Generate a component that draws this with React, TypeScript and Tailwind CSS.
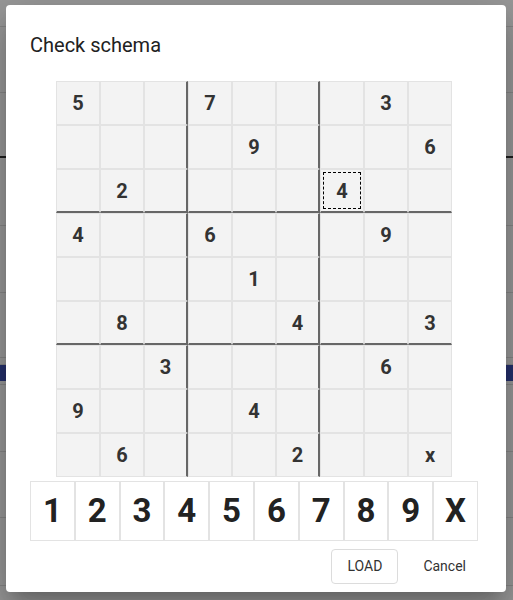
import React from 'react';

/** Схема судоку: null — пустая клетка. */
const BOARD: (string | null)[][] = [
  ['5', null, null, '7', null, null, null, '3', null],
  [null, null, null, null, '9', null, null, null, '6'],
  [null, '2', null, null, null, null, '4', null, null],
  ['4', null, null, '6', null, null, null, '9', null],
  [null, null, null, null, '1', null, null, null, null],
  [null, '8', null, null, null, '4', null, null, '3'],
  [null, null, '3', null, null, null, null, '6', null],
  ['9', null, null, null, '4', null, null, null, null],
  [null, '6', null, null, null, '2', null, null, 'x'],
];

const PAD = ['1', '2', '3', '4', '5', '6', '7', '8', '9', 'X'];

const SELECTED = { row: 2, col: 6 };

/** Фон страницы под затемнением (видны только края). */
function BackgroundPage(): JSX.Element {
  const rows = [27, 66, 65, 68, 67, 65, 7, 16, 4, 67, 66, 68];
  return (
    <div className="h-[600px] w-[513px] overflow-hidden bg-white">
      {rows.map((h, i) => (
        <div
          key={i}
          style={{ height: h }}
          className={
            i === 6
              ? 'border-b border-[#e0e0e0] bg-white'
              : i === 7
                ? 'bg-[#3f51b5]'
                : i === 2
                  ? 'border-b-2 border-[#333]'
                  : 'border-b border-[#e0e0e0]'
          }
        />
      ))}
    </div>
  );
}

function Cell({ value, row, col }: { value: string | null; row: number; col: number }): JSX.Element {
  const selected = row === SELECTED.row && col === SELECTED.col;
  const thickRight = col === 2 || col === 5;
  const thickBottom = row === 2 || row === 5;
  return (
    <div
      className={[
        'flex h-[44px] w-[44px] border border-[#e3e3e3] bg-[#f3f3f3] p-[2px]',
        thickRight ? 'border-r-2 border-r-[#666666]' : '',
        thickBottom ? 'border-b-2 border-b-[#666666]' : '',
      ].join(' ')}
    >
      <div
        className={[
          'flex flex-1 items-center justify-center text-[20px] font-bold text-[#333333]',
          selected ? 'border border-dashed border-black' : 'border border-transparent',
        ].join(' ')}
      >
        {value}
      </div>
    </div>
  );
}

export default function App(): JSX.Element {
  return (
    <div className="relative h-[600px] w-[513px] overflow-hidden font-['Roboto',sans-serif]">
      <BackgroundPage />
      {/* Затемнение + диалог */}
      <div className="absolute inset-0 flex items-start justify-start bg-black/40 pt-[5px] pl-[6px]">
        <div className="flex h-[587px] w-[500px] flex-col rounded-[4px] bg-white shadow-[0_11px_15px_-7px_rgba(0,0,0,0.2),0_24px_38px_3px_rgba(0,0,0,0.14),0_9px_46px_8px_rgba(0,0,0,0.12)]">
          <h2 className="px-[24px] pt-[24px] text-[20px] leading-[32px] font-normal text-[#212121]">
            Check schema
          </h2>

          <div className="mt-[20px] flex flex-col items-start pl-[24px]">
            <div className="ml-[26px] grid w-[396px] grid-cols-9">
              {BOARD.map((r, ri) =>
                r.map((v, ci) => <Cell key={`${ri}-${ci}`} value={v} row={ri} col={ci} />),
              )}
            </div>

            <div className="mt-[4px] flex w-[448px]">
              {PAD.map((d) => (
                <button
                  key={d}
                  type="button"
                  className="flex h-[60px] w-[44.8px] items-center justify-center border border-[#e3e3e3] bg-white text-[33px] font-bold text-[#222222]"
                >
                  {d}
                </button>
              ))}
            </div>
          </div>

          <div className="mt-[8px] flex items-center justify-end gap-[9px] pr-[24px]">
            <button
              type="button"
              className="h-[35px] w-[67px] rounded-[4px] border border-[#dcdcdc] text-[14px] text-[#333333]"
            >
              LOAD
            </button>
            <button type="button" className="h-[35px] px-[16px] text-[14px] text-[#333333]">
              Cancel
            </button>
          </div>
        </div>
      </div>
    </div>
  );
}
